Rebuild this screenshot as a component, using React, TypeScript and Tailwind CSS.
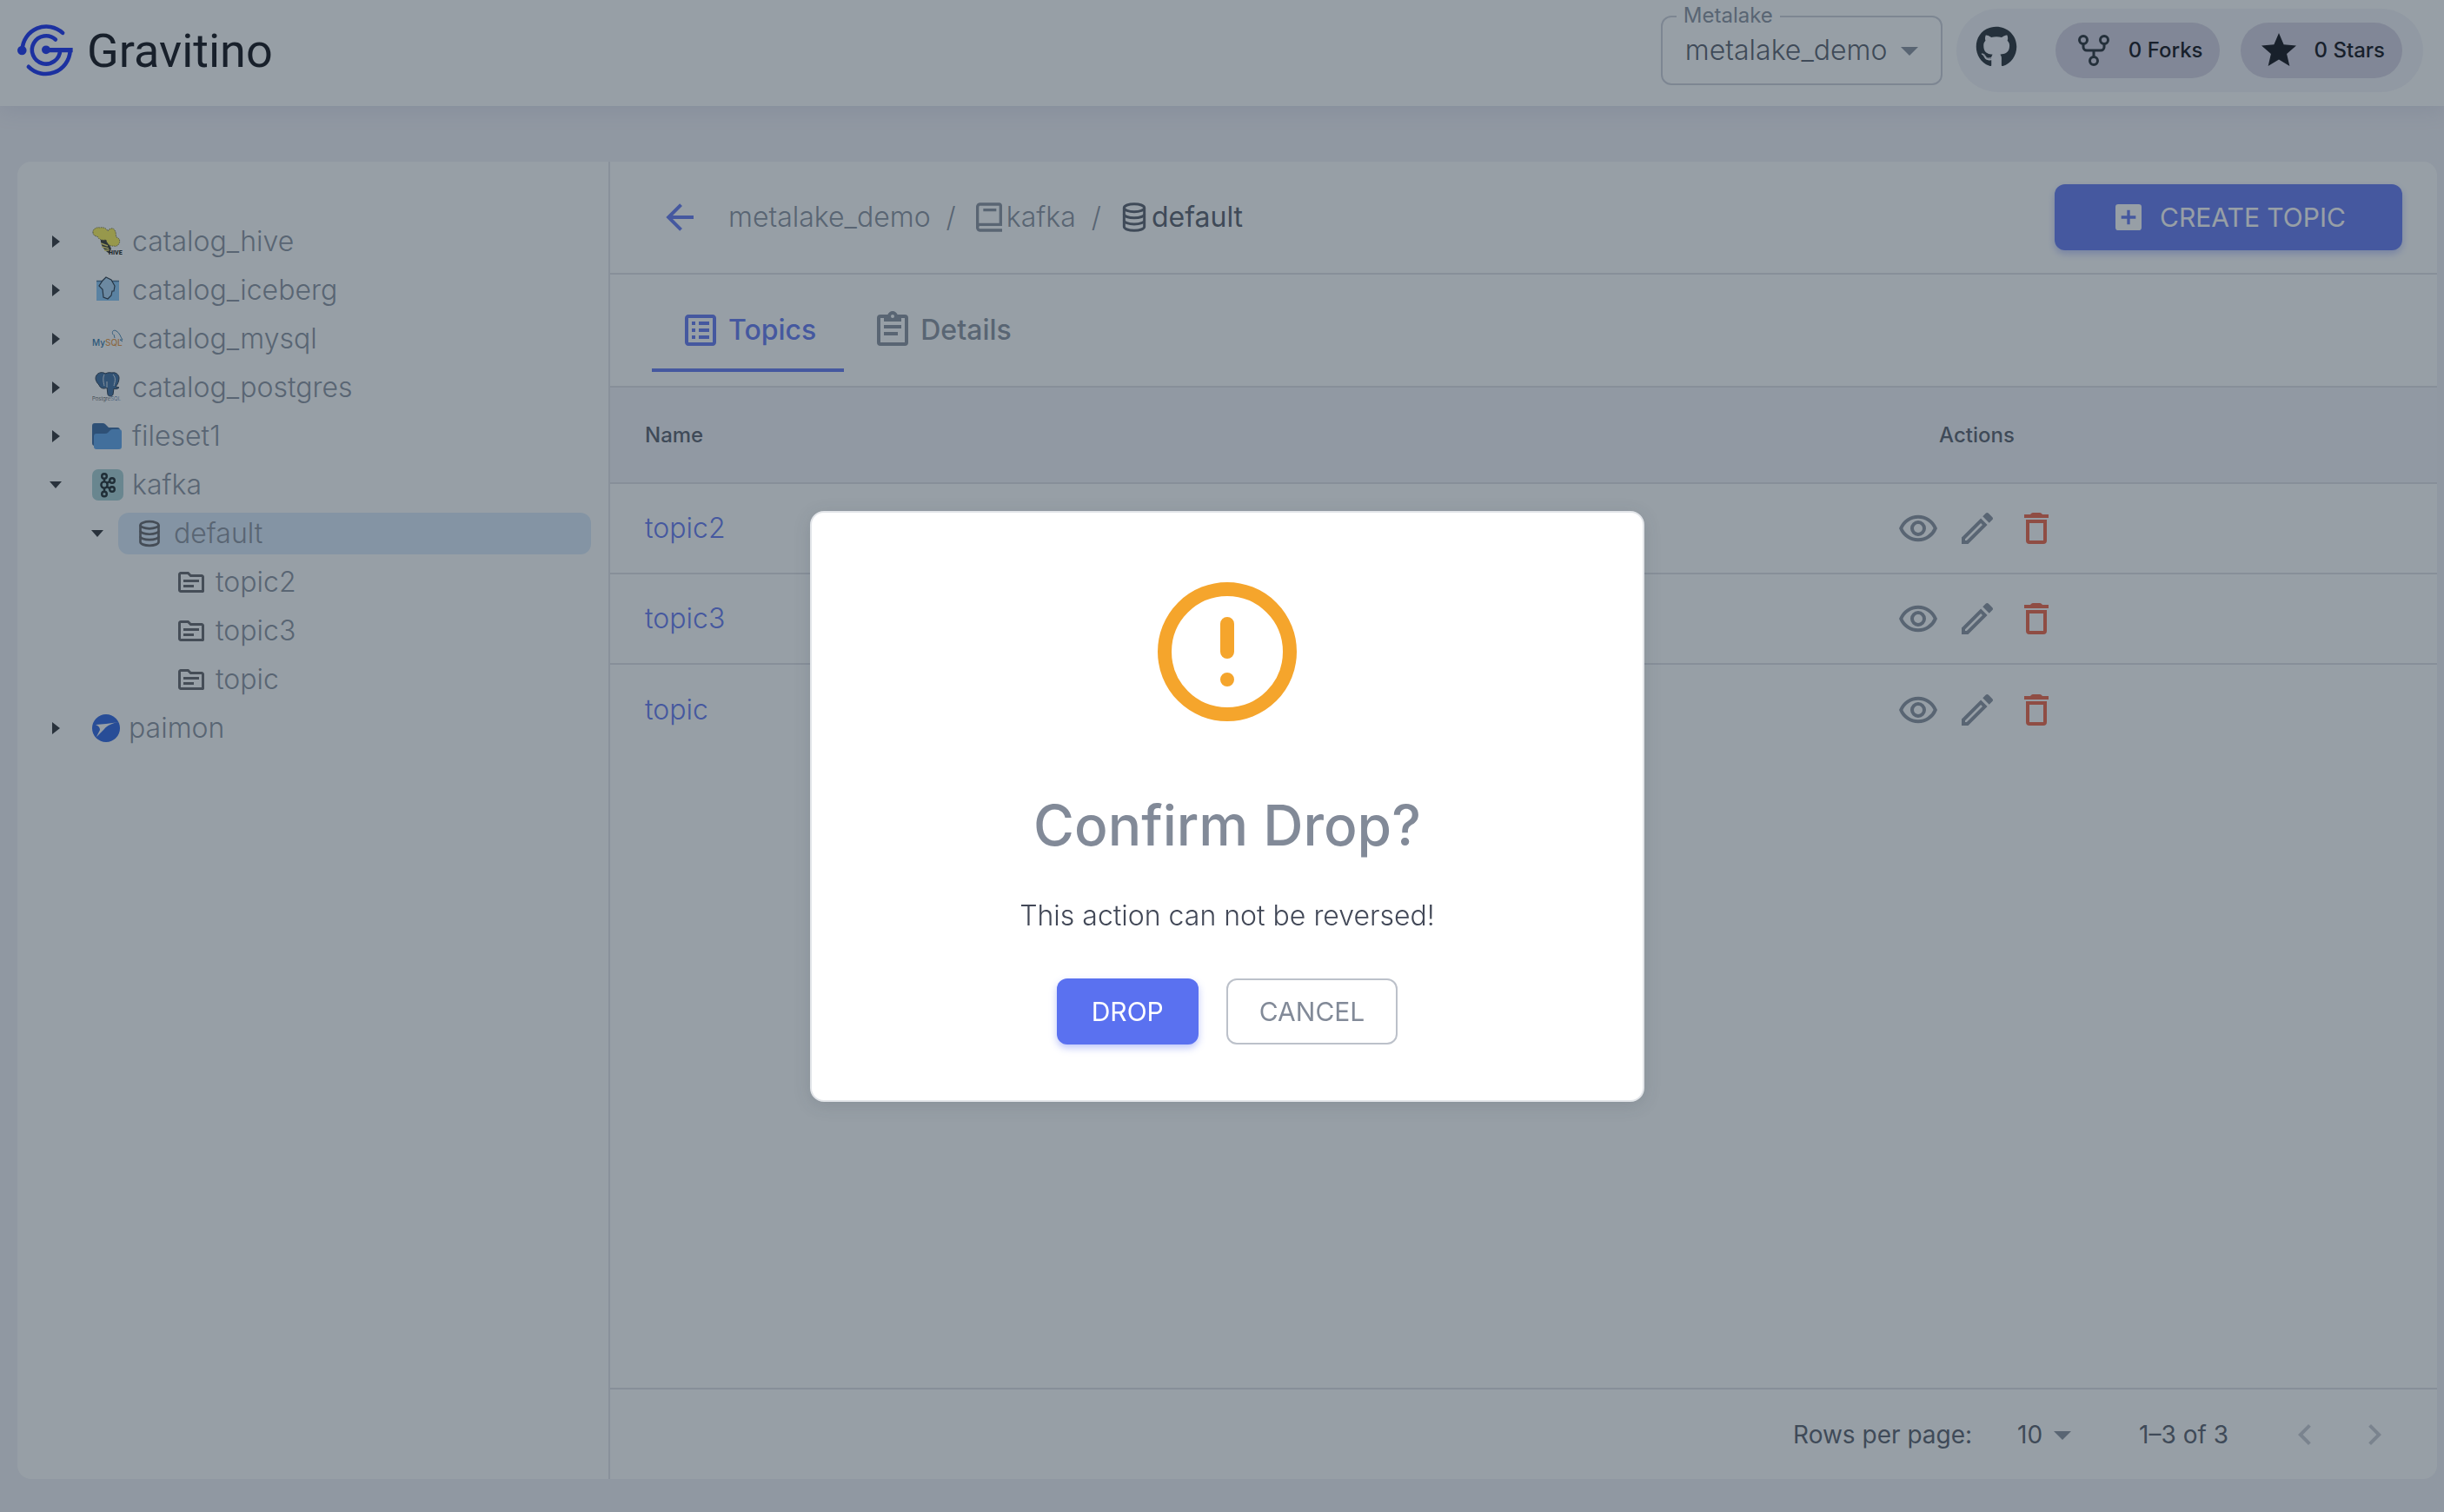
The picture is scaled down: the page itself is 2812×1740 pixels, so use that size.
import { useState } from "react";
import type { ReactNode } from "react";
import { BiBook } from "react-icons/bi";
import { FaGithub } from "react-icons/fa";
import { MdOutlineTopic } from "react-icons/md";

const ICONS = {
  arrowLeft: "M20 11v2H8l5.5 5.5l-1.42 1.42L4.16 12l7.92-7.92L13.5 5.5L8 11h12z",
  plusBox: "M17 13h-4v4h-2v-4H7v-2h4V7h2v4h4m2-8H5a2 2 0 0 0-2 2v14a2 2 0 0 0 2 2h14a2 2 0 0 0 2-2V5a2 2 0 0 0-2-2z",
  listBox: "M11 15h6v2h-6v-2M9 7H7v2h2V7m2 6h6v-2h-6v2m0-4h6V7h-6v2m-2 2H7v2h2v-2m12-6v14c0 1.1-.9 2-2 2H5c-1.1 0-2-.9-2-2V5c0-1.1.9-2 2-2h14c1.1 0 2 .9 2 2m-2 0H5v14h14V5M9 15H7v2h2v-2z",
  clipboard: "M19 3h-4.18C14.4 1.84 13.3 1 12 1c-1.3 0-2.4.84-2.82 2H5a2 2 0 0 0-2 2v14a2 2 0 0 0 2 2h14a2 2 0 0 0 2-2V5a2 2 0 0 0-2-2m-7 0a1 1 0 0 1 1 1a1 1 0 0 1-1 1a1 1 0 0 1-1-1a1 1 0 0 1 1-1M7 7h10V5h2v14H5V5h2v2m10 4H7V9h10v2m-2 4H7v-2h8v2z",
  pencil: "M14.06 9L15 9.94L5.92 19H5v-.92L14.06 9m3.6-6c-.25 0-.51.1-.7.29l-1.83 1.83l3.75 3.75l1.83-1.83c.39-.39.39-1.04 0-1.41l-2.34-2.34c-.2-.2-.45-.29-.71-.29m-3.6 3.19L3 17.25V21h3.75L17.81 9.94l-3.75-3.75z",
  trash: "M6 19a2 2 0 0 0 2 2h8a2 2 0 0 0 2-2V7H6v12M8 9h8v10H8V9M15.5 4l-.6-.6q-.4-.4-.9-.4h-4q-.5 0-.9.4l-.6.6H5v2h14V4z",
  star: "M12 17.27L18.18 21l-1.64-7.03L22 9.24l-7.19-.61L12 2L9.19 8.63L2 9.24l5.46 4.73L5.82 21z",
  chevronLeft: "M15.41 16.58L10.83 12l4.58-4.59L14 6l-6 6l6 6z",
  chevronRight: "M8.59 16.58L13.17 12L8.59 7.41L10 6l6 6l-6 6z",
  menuDown: "M7 10l5 5 5-5z",
};

function Icon({ name, className = "size-12" }: { name: keyof typeof ICONS; className?: string }) {
  return (
    <svg viewBox="0 0 24 24" fill="currentColor" fillRule="evenodd" className={`shrink-0 ${className}`} aria-hidden="true">
      <path d={ICONS[name]} />
    </svg>
  );
}

function EyeIcon() {
  return (
    <svg viewBox="0 0 24 24" className="size-12" fill="none" stroke="currentColor" strokeWidth="2" aria-hidden="true">
      <path d="M2.1 12a10.7 10.7 0 0 1 19.8 0a10.7 10.7 0 0 1-19.8 0z" />
      <circle cx="12" cy="12" r="3.5" />
    </svg>
  );
}

function DatabaseIcon({ className = "size-9" }: { className?: string }) {
  return (
    <svg viewBox="0 0 24 24" className={`shrink-0 ${className}`} fill="none" stroke="currentColor" strokeWidth="1.8" aria-hidden="true">
      <ellipse cx="12" cy="5.5" rx="7" ry="2.7" />
      <path d="M5 5.500v13c0 1.500 3 2.700 7 2.700s7-1.200 7-2.700v-13" />
      <path d="M5 9.800c0 1.500 3 2.700 7 2.700s7-1.200 7-2.700M5 14.100c0 1.500 3 2.700 7 2.700s7-1.200 7-2.700" />
    </svg>
  );
}

function Logo() {
  return (
    <svg viewBox="30 36 194 188" className="h-[62px] w-16" fill="none" stroke="#0923f3" strokeWidth="14" strokeLinecap="round" aria-hidden="true">
      <path d="M188 69A84 84 0 0 0 47 128" />
      <path d="M163 92A49 49 0 1 0 179 130" />
      <path d="M69 187A85 85 0 0 0 214 132" />
      <path d="M130 129H215" strokeWidth="16" strokeLinecap="square" />
      <circle cx="130" cy="128" r="15" fill="#0923f3" stroke="none" />
      <circle cx="46" cy="130" r="16" fill="#0923f3" stroke="none" />
    </svg>
  );
}

function HiveIcon() {
  return (
    <svg viewBox="0 0 36 36" className="size-9" aria-hidden="true">
      <path d="M10 14c-1 6 2 13 10 18l2-6-6-12z" fill="#2b2b20" />
      <path d="M10 20l8 3M11 24l8 2M14 28l6 0" stroke="#f4e36a" strokeWidth="1.4" />
      <path d="M1 8C0 4 5 1 9 2c4-1 8 1 9 4 2-4 7-4 8-1 2 3 1 6 2 8 3 1 5 4 3 7-1 3-4 4-6 3-5 1-8-3-9-7-5 1-8 0-10-4-3 0-5-2-5-4z" fill="#fff04a" stroke="#4f4a2a" strokeWidth="0.8" strokeDasharray="1.5 1" />
      <text x="19" y="33" fontSize="7" fontWeight="900" fontFamily="Roboto, sans-serif" fill="#15150f">HIVE</text>
    </svg>
  );
}

function IcebergIcon() {
  return (
    <svg viewBox="0 0 36 36" className="size-9" aria-hidden="true">
      <path d="M5 7h26v23H5z" fill="#84c4f6" />
      <path d="M5 7.500h26" stroke="#3f6b93" strokeWidth="1.500" />
      <path d="M16 3l6 3 4 7-1 6-2 0-1 5-4 4-5-2-1-9-4-4 4-6z" fill="#a9d3f4" stroke="#1c2a3a" strokeWidth="1.2" />
    </svg>
  );
}

function MysqlIcon() {
  return (
    <svg viewBox="0 0 36 36" className="size-9" aria-hidden="true">
      <path d="M24 13c-2-4 1-6 4-4 4 2 5 8 7 10l-3 0 3 2M25 13l1 4" fill="none" stroke="#3f7fb0" strokeWidth="1" />
      <text x="0" y="26" fontSize="10" fontWeight="500" fontFamily="Inter, sans-serif" fill="#1f6fa5">
        My<tspan fill="#e8933a">SQL</tspan>
      </text>
    </svg>
  );
}

function PostgresIcon() {
  return (
    <svg viewBox="0 0 36 36" className="size-9" aria-hidden="true">
      <path d="M5 4c2-4 8-4 10-2 4-2 7-1 8-1 4-1 8 2 8 6s-2 8-4 10l4 1c-2 2-5 2-6 1l-1 7c-1 3-6 2-6 0l-1-8c-3 2-8 1-9-3C4 11 3 7 5 4z" fill="#33649a" stroke="#1d2c40" strokeWidth="1" />
      <path d="M14 3c-2 4-1 9 0 13M24 3c4 4 2 9 1 13M17 11v7" fill="none" stroke="#dfe8f0" strokeWidth="1" />
      <text x="0" y="33" fontSize="6" fontFamily="Inter, sans-serif" fill="#2a2a2a">
        Postgre<tspan fill="#33649a">SQL</tspan>
      </text>
    </svg>
  );
}

function FolderIcon() {
  return (
    <svg viewBox="0 0 36 36" className="size-9" aria-hidden="true">
      <path d="M0 6a3 3 0 0 1 3-3h9q2 0 3 1l4 4h10q3 0 3 3v18H3a3 3 0 0 1-3-3z" fill="#2d609f" />
      <path d="M2 18q0-3 3-3h10q2 0 3-1l3-3q1-1 3-1h7a3 3 0 0 1 3 3v17a3 3 0 0 1-3 3H5q-3 0-3-3z" fill="#559fea" />
    </svg>
  );
}

function KafkaIcon() {
  return (
    <svg viewBox="0 0 36 36" className="size-9" fill="none" stroke="#101c20" strokeWidth="2.4" aria-hidden="true">
      <rect width="36" height="36" rx="7" fill="#a2cdd0" stroke="none" />
      <circle cx="14" cy="8" r="2.800" />
      <circle cx="14" cy="18" r="3.600" />
      <circle cx="14" cy="28.500" r="2.800" />
      <circle cx="23" cy="13" r="2.800" />
      <circle cx="23" cy="23" r="2.800" />
      <path d="M14 11v3M14 22v3M17 16l3-2M17 20l3 2" />
    </svg>
  );
}

function PaimonIcon() {
  return (
    <svg viewBox="0 0 32 32" className="size-8" aria-hidden="true">
      <circle cx="16" cy="16" r="16" fill="#215be0" />
      <path d="M4 12l12-1 15-2c-8 1-14 4-17 8L5 26C7 22 8 20 9 18c0-3-2-5-5-6z" fill="#fff" />
    </svg>
  );
}

function ForkIcon() {
  return (
    <svg viewBox="-6 -6 48 48" className="size-12" fill="none" stroke="#192129" strokeWidth="3" aria-hidden="true">
      <circle cx="6" cy="6" r="4.500" />
      <circle cx="30" cy="6" r="4.500" />
      <circle cx="18" cy="30" r="4.500" />
      <path d="M6 10v4a4 4 0 0 0 4 4h16a4 4 0 0 0 4-4v-4M18 18v8" />
    </svg>
  );
}

function Caret({ open }: { open: boolean }) {
  return (
    <svg viewBox="0 0 16 16" className="size-4" fill="#22252b" aria-hidden="true">
      <path d={open ? "M1 4h14l-7 8z" : "M4 1l9 7-9 7z"} />
    </svg>
  );
}

type NodeProps = {
  label: string;
  icon: ReactNode;
  open?: boolean;
  leaf?: boolean;
  selected?: boolean;
  children?: ReactNode;
};

function TreeNode({ label, icon, open = false, leaf = false, selected = false, children }: NodeProps) {
  return (
    <li>
      <div className="flex h-14 items-center">
        {leaf ? (
          <span className="w-12 shrink-0" />
        ) : (
          <button type="button" aria-label={`Toggle ${label}`} className="flex h-12 w-12 shrink-0 items-center justify-center">
            <Caret open={open} />
          </button>
        )}
        <a href={`#${label}`} className={`flex h-12 flex-1 items-center gap-[10px] rounded-xl px-[18px] ${selected ? "bg-[#d9e9fa]" : ""}`}>
          <span className="text-[#5b5b61]">{icon}</span>
          {label}
        </a>
      </div>
      {children && <ul className="pl-12">{children}</ul>}
    </li>
  );
}

function Header() {
  return (
    <header className="flex h-[122px] items-center justify-between bg-white pr-6 pb-[6px] pl-5 shadow-[0_4px_24px_rgba(90,100,160,0.14)]">
      <a href="#home" className="flex items-center gap-4 font-['Roboto',sans-serif] text-[54px] text-[#000008]">
        <Logo />
        Gravitino
      </a>
      <div className="flex items-center gap-4">
        <div className="relative flex h-20 w-[324px] items-center rounded-xl border-2 border-[#cbcdd7]">
          <label htmlFor="metalake" className="absolute -top-4 left-4 bg-white px-2 text-2xl leading-7 text-[#828a98]">
            Metalake
          </label>
          <select id="metalake" className="h-full w-full appearance-none pl-[26px] text-[32px] font-light text-[#4f5563]">
            <option>metalake_demo</option>
          </select>
          <Icon name="menuDown" className="pointer-events-none absolute right-3 size-12 text-[#828a98]" />
        </div>
        <div className="flex h-24 items-center rounded-full bg-[#f3f3f8] pr-6 pl-[22px]">
          <a href="#github" aria-label="GitHub" className="mr-11 pb-2 text-[#192129]">
            <FaGithub className="size-12" />
          </a>
          <div className="flex gap-6 text-2xl font-medium text-[#000008]">
            <a href="#forks" className="flex h-16 items-center gap-4 rounded-full bg-[#d3cfe0] px-5">
              <ForkIcon />0 Forks
            </a>
            <a href="#stars" className="flex h-16 items-center gap-4 rounded-full bg-[#d3cfe0] px-5">
              <Icon name="star" />0 Stars
            </a>
          </div>
        </div>
      </div>
    </header>
  );
}

function Sidebar() {
  const topic = <MdOutlineTopic className="size-9" />;
  return (
    <nav aria-label="Catalogs" className="w-[682px] shrink-0 border-r-2 border-[#e3e3e9] px-5 pt-16 text-[32px] font-light text-[#828a98]">
      <ul>
        <TreeNode label="catalog_hive" icon={<HiveIcon />} />
        <TreeNode label="catalog_iceberg" icon={<IcebergIcon />} />
        <TreeNode label="catalog_mysql" icon={<MysqlIcon />} />
        <TreeNode label="catalog_postgres" icon={<PostgresIcon />} />
        <TreeNode label="fileset1" icon={<FolderIcon />} />
        <TreeNode label="kafka" icon={<KafkaIcon />} open>
          <TreeNode label="default" icon={<DatabaseIcon />} open selected>
            <TreeNode label="topic2" icon={topic} leaf />
            <TreeNode label="topic3" icon={topic} leaf />
            <TreeNode label="topic" icon={topic} leaf />
          </TreeNode>
        </TreeNode>
        <TreeNode label="paimon" icon={<PaimonIcon />} />
      </ul>
    </nav>
  );
}

function TopicsTable({ onDrop }: { onDrop: () => void }) {
  const topics = ["topic2", "topic3", "topic"];
  return (
    <table className="w-full table-fixed">
      <thead>
        <tr className="h-[110px] border-b-2 border-[#dfdfe5] bg-[#f3f3f9] text-2xl text-[#4f5563]">
          <th className="w-1/2 pl-10 text-left font-medium">Name</th>
          <th className="w-1/2 pr-2 text-center font-medium">Actions</th>
        </tr>
      </thead>
      <tbody>
        {topics.map((t) => (
          <tr key={t} className="h-[104px] border-b-2 border-[#dfdfe5] last:border-b-0">
            <td className="pl-10">
              <a href={`#${t}`} className="text-[32px] font-light text-[#5a71f0]">{t}</a>
            </td>
            <td className="pr-2">
              <div className="flex justify-center gap-5 text-[#828a98]">
                <button type="button" aria-label={`View ${t}`}><EyeIcon /></button>
                <button type="button" aria-label={`Edit ${t}`}><Icon name="pencil" /></button>
                <button type="button" aria-label={`Drop ${t}`} onClick={onDrop} className="text-[#ef5b3a]"><Icon name="trash" /></button>
              </div>
            </td>
          </tr>
        ))}
      </tbody>
    </table>
  );
}

function Pagination() {
  return (
    <div className="flex h-[105px] items-center justify-end border-t-2 border-[#dfdfe5] pr-8 text-[28px] text-[#4f5563]">
      <label htmlFor="rows">Rows per page:</label>
      <div className="relative ml-[52px] flex items-center">
        <select id="rows" className="w-[88px] appearance-none">
          <option>10</option>
        </select>
        <Icon name="menuDown" className="pointer-events-none absolute right-3 size-12 text-[#828a98]" />
      </div>
      <span className="mr-12 ml-[52px]">1–3 of 3</span>
      <button type="button" aria-label="Previous page" disabled className="p-4 text-[#c4c7cf]"><Icon name="chevronLeft" /></button>
      <button type="button" aria-label="Next page" disabled className="p-4 text-[#c4c7cf]"><Icon name="chevronRight" /></button>
    </div>
  );
}

function ConfirmDialog({ onClose }: { onClose: () => void }) {
  return (
    <div className="fixed inset-0 flex items-center justify-center bg-[#2f3f4d]/50 pt-[116px] pl-3">
      <div role="alertdialog" aria-labelledby="confirm-title" className="flex w-[960px] flex-col items-center rounded-2xl border-2 border-[#e2e5e9] bg-white py-16 shadow-[0_4px_20px_rgba(47,63,77,0.15)]">
        <svg viewBox="0 0 24 24" className="size-48" fill="none" stroke="#f5a52c" strokeWidth="2" strokeLinecap="round" aria-hidden="true">
          <circle cx="12" cy="12" r="9" />
          <path d="M12 8v4M12 16v.01" />
        </svg>
        <h2 id="confirm-title" className="mt-14 text-[64px] leading-[96px] font-medium text-[#828a98]">Confirm Drop?</h2>
        <p className="mt-8 text-[32px] leading-[48px] font-light text-[#424857]">This action can not be reversed!</p>
        <div className="mt-12 flex gap-8 text-[30px]">
          <button type="button" onClick={onClose} className="h-[76px] rounded-xl bg-[#5a71f0] px-10 text-white shadow-[0_4px_8px_rgba(90,113,240,0.4)]">DROP</button>
          <button type="button" onClick={onClose} className="h-[76px] rounded-xl border-2 border-[#bcc1ca] px-9 text-[#828a98]">CANCEL</button>
        </div>
      </div>
    </div>
  );
}

export default function App() {
  const [confirming, setConfirming] = useState(true);

  return (
    <div className="flex min-h-screen flex-col bg-[#f1f0f6] font-['Inter',sans-serif]">
      <Header />
      <main className="flex flex-1 pt-16 pr-2 pb-[38px] pl-5">
        <div className="flex flex-1 overflow-hidden rounded-2xl bg-white">
          <Sidebar />
          <section className="flex flex-1 flex-col">
            <div className="flex h-[130px] items-center justify-between border-b-2 border-[#dfdfe5] pr-10 pl-14">
              <div className="flex items-center">
                <button type="button" aria-label="Back" className="mr-8 text-[#5a71f0]">
                  <Icon name="arrowLeft" />
                </button>
                <nav aria-label="Breadcrumb" className="flex items-center gap-[18px] text-[32px] font-light text-[#828a98]">
                  <a href="#metalake_demo">metalake_demo</a>
                  <span>/</span>
                  <a href="#kafka" className="flex items-center"><BiBook className="size-10" />kafka</a>
                  <span>/</span>
                  <a href="#default" className="flex items-center font-normal text-[#4f5563]"><DatabaseIcon className="size-10" />default</a>
                </nav>
              </div>
              <button type="button" className="flex h-[76px] w-[400px] items-center justify-center gap-4 rounded-xl bg-[#5a71f0] text-[30px] text-white shadow-[0_4px_8px_rgba(90,113,240,0.4)]">
                <Icon name="plusBox" className="size-10" />
                CREATE TOPIC
              </button>
            </div>
            <div role="tablist" className="flex h-[130px] items-end border-b-2 border-[#dfdfe5] px-12 pb-4 text-[32px] font-medium">
              <button type="button" role="tab" aria-selected="true" className="flex h-24 items-center gap-2 border-b-4 border-[#5a71f0] px-8 pt-1 text-[#5a71f0]">
                <Icon name="listBox" />
                Topics
              </button>
              <button type="button" role="tab" aria-selected="false" className="flex h-24 items-center gap-2 border-b-4 border-transparent px-8 pt-1 text-[#828a98]">
                <Icon name="clipboard" />
                Details
              </button>
            </div>
            <div className="flex-1">
              <TopicsTable onDrop={() => setConfirming(true)} />
            </div>
            <Pagination />
          </section>
        </div>
      </main>
      {confirming && <ConfirmDialog onClose={() => setConfirming(false)} />}
    </div>
  );
}
